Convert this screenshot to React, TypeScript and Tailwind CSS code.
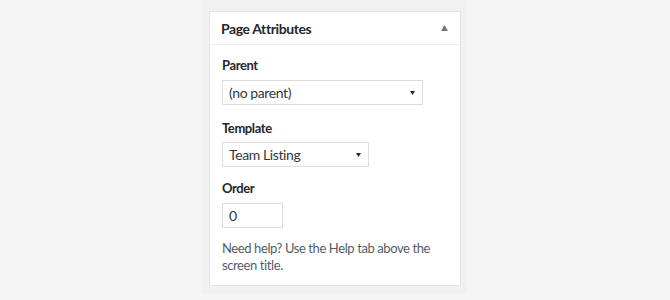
const font = { fontFamily: 'Lato, "Open Sans", sans-serif' };

function Caret({ up }: { up?: boolean }) {
  if (up) {
    return (
      <svg width="7" height="6" viewBox="0 0 7 6" className="text-[#72777c]">
        <path d="M0 6 L3.5 0 L7 6 Z" fill="currentColor" />
      </svg>
    );
  }
  return (
    <svg width="5" height="4" viewBox="0 0 5 4" className="text-[#23282d]">
      <path d="M0 0 L5 0 L2.5 4 Z" fill="currentColor" />
    </svg>
  );
}

function FakeSelect({ value, width }: { value: string; width: string }) {
  return (
    <div className={`flex h-[25px] items-center justify-between border border-[#dddddd] bg-white pl-[6px] pr-[7px] text-[14px] text-[#32373c] ${width}`}>
      <span>{value}</span>
      <Caret />
    </div>
  );
}

export default function App() {
  return (
    <div className="flex h-[300px] w-[670px] justify-center bg-[#f5f5f5] tracking-[-0.4px]" style={font}>
      <div className="ml-[-1px] h-[294px] w-[265px] bg-[#f1f1f1] pl-[7px] pr-[6px] pt-[11px]">
        <div className="border border-[#e5e5e5] bg-white">
          <div className="flex h-[33px] items-center justify-between border-b border-[#eeeeee] pl-[11px] pr-[12px]">
            <h2 className="text-[14px] font-bold text-[#23282d]">Page Attributes</h2>
            <Caret up />
          </div>
          <div className="pb-[11px] pl-[12px] pr-[12px] pt-[11px] text-[13px] text-[#444444]">
            <p className="h-[18px] font-bold leading-[18px] text-[#23282d]">Parent</p>
            <div className="mt-[6px]">
              <FakeSelect value="(no parent)" width="w-[201px]" />
            </div>
            <p className="mt-[14px] h-[18px] font-bold leading-[18px] text-[#23282d]">Template</p>
            <div className="mt-[5px]">
              <FakeSelect value="Team Listing" width="w-[147px]" />
            </div>
            <p className="mt-[12px] h-[18px] font-bold leading-[18px] text-[#23282d]">Order</p>
            <div className="mt-[6px] flex h-[25px] w-[61px] items-center border border-[#dddddd] pl-[6px] text-[14px] text-[#32373c]">0</div>
            <p className="mt-[12px] leading-[17px] text-[#555d66]">Need help? Use the Help tab above the screen title.</p>
          </div>
        </div>
      </div>
    </div>
  );
}
